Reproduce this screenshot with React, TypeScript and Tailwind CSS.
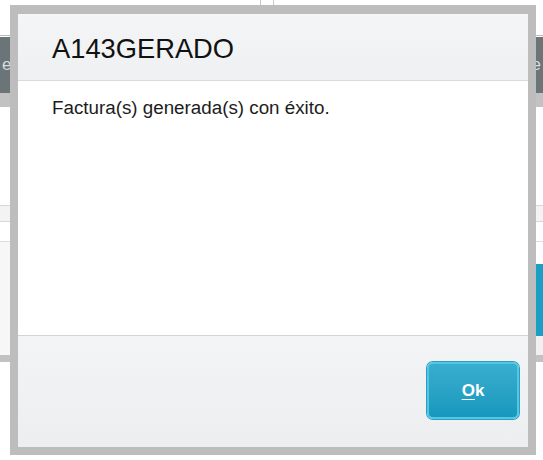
export default function App() {
  return (
    <div
      className="relative w-[543px] h-[460px] overflow-hidden bg-white"
      style={{ fontFamily: '"Liberation Sans", Arial, sans-serif' }}
    >
      {/* app behind the modal */}
      <div className="flex flex-col w-full h-full">
        <div className="relative h-[35px] bg-white">
          <div className="absolute left-[260px] top-0 h-[5px] w-px bg-[#c8c8c8]" />
          <div className="absolute left-[273px] top-0 h-[5px] w-px bg-[#c8c8c8]" />
        </div>
        <div className="h-px bg-[#b8bcc0]" />
        <div className="h-px bg-white" />
        <div className="h-[56px] bg-[#6b7477] flex items-center justify-between px-[2px] text-[17px] text-[#d6dde0]">
          <span>e</span>
          <span>e</span>
        </div>
        <div className="h-[14px] bg-[#c2c2c2]" />
        <div className="h-[98px] bg-white" />
        <div className="h-[17px] bg-[#f3f3f3] border-y border-[#d6d6d6]" />
        <div className="h-[20px] bg-white border-b border-[#dcdcdc]" />
        <div className="flex h-[113px]">
          <div className="flex-1 bg-[#f7f7f7] border-r border-[#e2e2e2]" />
          <div className="w-[20px] flex flex-col">
            <div className="h-[22px] bg-white" />
            <div className="h-[72px] bg-[#1b9fc4] text-white text-[18px] flex items-center pl-[1px]">n</div>
            <div className="flex-1 bg-[#f0f0f0]" />
          </div>
        </div>
        <div className="h-[7px] bg-[#c2c2c2]" />
        <div className="flex-1 bg-white" />
      </div>

      {/* modal */}
      <div className="absolute left-[10px] top-[5px] w-[526px] h-[450px] bg-[#bdbdbd] pt-[9px] pb-[8px] px-[8px]">
        <div className="flex flex-col h-full bg-white">
          <div className="h-[67px] shrink-0 bg-gradient-to-b from-[#f4f5f6] to-[#eff0f1] border-b border-[#dadada] pl-[34px] pt-[21px]">
            <h1 className="text-[27.3px] leading-none text-[#111]">A143GERADO</h1>
          </div>
          <div className="flex-1 pl-[34px] pt-[18px]">
            <p className="text-[18.8px] leading-none text-[#1c1c1c]">Factura(s) generada(s) con éxito.</p>
          </div>
          <div className="h-[112px] shrink-0 bg-gradient-to-b from-[#f3f4f5] to-[#edeef0] border-t border-[#d4d4d4] flex justify-end items-start pt-[26px] pr-[9px]">
            <button className="w-[92px] h-[57px] rounded-[6px] border-2 border-[#52c6e4] bg-gradient-to-b from-[#38aecf] to-[#1698bd] text-white text-[17px] font-bold flex items-center justify-center shadow-[0_0_0_1px_#2a9fc0]">
              <span>
                <span className="underline underline-offset-[3px]">O</span>k
              </span>
            </button>
          </div>
        </div>
      </div>
    </div>
  );
}
